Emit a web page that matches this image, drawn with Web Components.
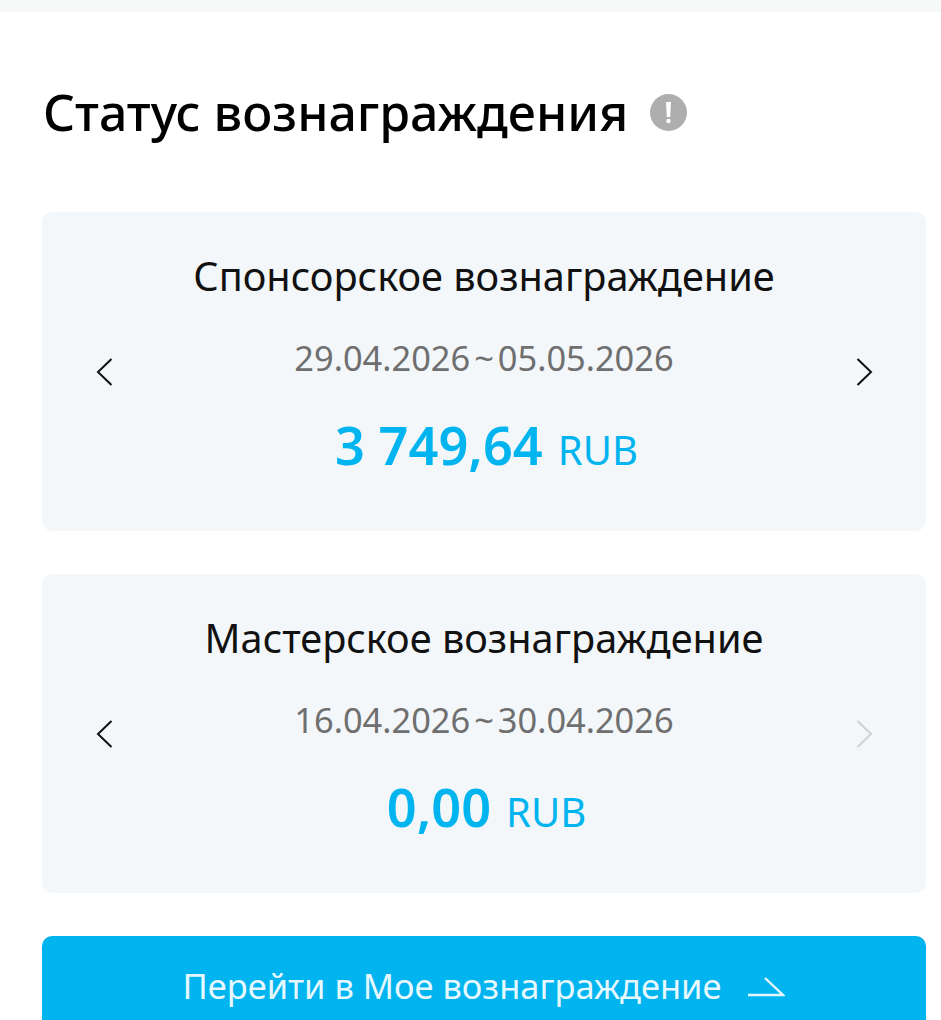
<!DOCTYPE html>
<html lang="ru">
<head>
<meta charset="utf-8">
<title>Статус вознаграждения</title>
<style>
    html, body { margin: 0; padding: 0; background: #fff; overflow: hidden; }
    body { height: 1020px; font-family: "Noto Sans", "Open Sans", sans-serif; }
</style>
</head>
<body>
<reward-page>
    <reward-heading>Статус вознаграждения</reward-heading>
    <reward-card title="Спонсорское вознаграждение" period="29.04.2026~05.05.2026" amount="3 749,64"></reward-card>
    <reward-card title="Мастерское вознаграждение" period="16.04.2026~30.04.2026" amount="0,00" next-disabled></reward-card>
    <reward-button>Перейти в Мое вознаграждение</reward-button>
</reward-page>

<script>
class RewardPage extends HTMLElement {
    constructor() {
        super();
        this.attachShadow({ mode: "open" });
    }

    connectedCallback() {
        this.shadowRoot.innerHTML = `
            <style>
            :host { display: block; }
            .top { height: 12px; background: #f7f8f8; }
            .content {
                display: flex;
                flex-direction: column;
                gap: 43px;
                padding: 0 15px 0 42px;
            }
            </style>
            <div class="top"></div>
            <div class="content"><slot></slot></div>
        `;
    }
}

class RewardHeading extends HTMLElement {
    constructor() {
        super();
        this.attachShadow({ mode: "open" });
    }

    connectedCallback() {
        this.shadowRoot.innerHTML = `
            <style>
            :host {
                display: flex;
                align-items: center;
                gap: 22px;
                height: 200px;
                box-sizing: border-box;
                margin-bottom: -43px;
                padding-left: 1px;
                color: #000;
                font-size: 50px;
                font-weight: 500;
                line-height: 68px;
                white-space: nowrap;
            }
            svg { width: 37px; height: 37px; flex: none; }
            </style>
            <slot></slot>
            <svg viewBox="0 0 37 37" aria-hidden="true">
                <circle cx="18.5" cy="18.5" r="18.5" fill="#aeaeae"/>
                <path d="M16 8h5l-.8 15h-3.4z" fill="#fff"/>
                <circle cx="18.5" cy="27" r="2.2" fill="#fff"/>
            </svg>
        `;
    }
}

class RewardCard extends HTMLElement {
    constructor() {
        super();
        this.attachShadow({ mode: "open" });
    }

    connectedCallback() {
        const title = this.getAttribute("title");
        const [from, to] = this.getAttribute("period").split("~");
        const amount = this.getAttribute("amount");
        const nextColor = this.hasAttribute("next-disabled") ? "#cfd2d4" : "#111";

        this.shadowRoot.innerHTML = `
            <style>
            :host {
                display: grid;
                grid-template-columns: 1fr auto 1fr;
                align-items: center;
                height: 319px;
                box-sizing: border-box;
                padding: 0 53px;
                background: #f3f7fa;
                border-radius: 10px;
            }
            .body {
                display: flex;
                flex-direction: column;
                align-items: center;
                white-space: nowrap;
                padding-bottom: 14px;
            }
            .title { font-size: 39.7px; line-height: 52px; color: #111; }
            .period {
                display: flex;
                gap: 4px;
                margin-top: 33px;
                font-size: 34.4px;
                line-height: 46px;
                color: #6f6f6f;
            }
            .amount {
                display: flex;
                align-items: baseline;
                gap: 15px;
                margin-top: 29px;
                margin-left: 5px;
                color: #00b4ef;
            }
            .value { font-size: 52.3px; line-height: 70px; font-weight: 600; }
            .unit { font-size: 40px; line-height: 52px; }
            svg { width: 18px; height: 30px; }
            .prev { justify-self: start; margin-left: 1px; }
            .next { justify-self: end; }
            </style>
            <svg class="prev" viewBox="0 0 18 30" aria-hidden="true">
                <path d="M15.5 2 2 15l13.5 13" fill="none" stroke="#111" stroke-width="2"/>
            </svg>
            <div class="body">
                <div class="title">${title}</div>
                <div class="period"><span>${from}</span><span>~</span><span>${to}</span></div>
                <div class="amount"><span class="value">${amount}</span><span class="unit">RUB</span></div>
            </div>
            <svg class="next" viewBox="0 0 18 30" aria-hidden="true">
                <path d="M2.5 2 16 15 2.5 28" fill="none" stroke="${nextColor}" stroke-width="2"/>
            </svg>
        `;
    }
}

class RewardButton extends HTMLElement {
    constructor() {
        super();
        this.attachShadow({ mode: "open" });
    }

    connectedCallback() {
        this.shadowRoot.innerHTML = `
            <style>
            :host {
                display: flex;
                justify-content: center;
                align-items: flex-start;
                gap: 26px;
                height: 104px;
                box-sizing: border-box;
                padding-top: 27px;
                background: #00b4ef;
                border-radius: 10px;
                color: #e6f8fe;
                font-size: 34.45px;
                line-height: 46px;
                white-space: nowrap;
            }
            svg { width: 38px; height: 24px; margin-top: 12px; }
            </style>
            <slot></slot>
            <svg viewBox="0 0 38 24" aria-hidden="true">
                <path d="M1 20h35L18 3" fill="none" stroke="#e6f8fe" stroke-width="2.4"/>
            </svg>
        `;
    }
}

customElements.define("reward-page", RewardPage);
customElements.define("reward-heading", RewardHeading);
customElements.define("reward-card", RewardCard);
customElements.define("reward-button", RewardButton);
</script>
</body>
</html>
